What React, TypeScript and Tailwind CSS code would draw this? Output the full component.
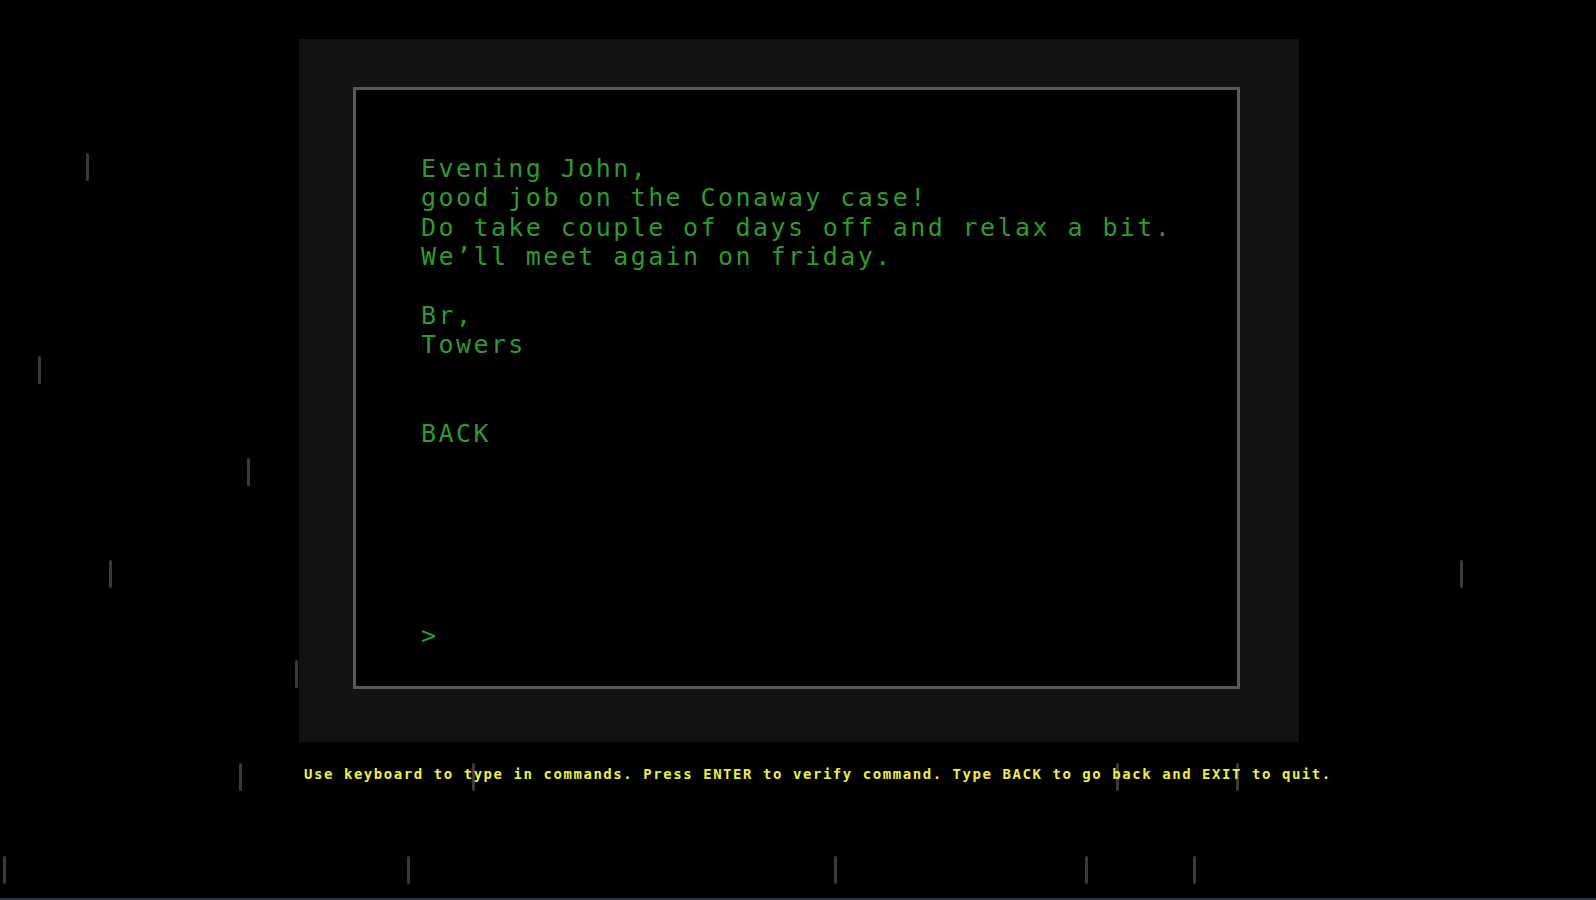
import React from "react";

// falling rain streaks behind the terminal: [x, y]
const DROPS: [number, number][] = [
  [86, 153],
  [38, 356],
  [247, 458],
  [109, 560],
  [295, 660],
  [239, 763],
  [472, 763],
  [1116, 763],
  [1236, 763],
  [1460, 560],
  [3, 856],
  [407, 856],
  [834, 856],
  [1085, 856],
  [1193, 856],
];

const MESSAGE = [
  "Evening John,",
  "good job on the Conaway case!",
  "Do take couple of days off and relax a bit.",
  "We\u2019ll meet again on friday.",
  "",
  "Br,",
  "Towers",
  "",
  "",
  "BACK",
];

const mono = "font-['DejaVu_Sans_Mono','Liberation_Mono',monospace]";

export default function App() {
  return (
    <div className="relative h-[900px] w-full overflow-hidden bg-black">
      {DROPS.map(([x, y], i) => (
        <span
          key={i}
          className="absolute h-[28px] w-[3px] rounded-full bg-[#3a3a3a]"
          style={{ left: x, top: y }}
        />
      ))}

      <div className="relative pl-[299px] pt-[39px]">
        {/* monitor bezel */}
        <div className="h-[703px] w-[1000px] bg-[#121212] pl-[54px] pt-[48px]">
          <div
            className={`flex h-[602px] w-[887px] flex-col border-[3px] border-[#5a5a5a] bg-black pl-[65px] pt-[64px] pb-[36px] text-[25px] leading-[29.4px] tracking-[2.42px] text-[#2f9a2f] ${mono}`}
          >
            {MESSAGE.map((line, i) => (
              <div key={i} className="whitespace-pre">
                {line || "\u00A0"}
              </div>
            ))}
            <div className="mt-auto">&gt;</div>
          </div>
        </div>

        <p
          className={`mt-[22px] pl-[5px] text-[14px] leading-[20px] font-bold tracking-[1.55px] whitespace-pre text-[#eeee44] ${mono}`}
        >
          Use keyboard to type in commands. Press ENTER to verify command. Type BACK to go back and EXIT to quit.
        </p>
      </div>

      <div className="absolute bottom-0 left-0 h-[2px] w-full bg-[#25344a]" />
    </div>
  );
}
